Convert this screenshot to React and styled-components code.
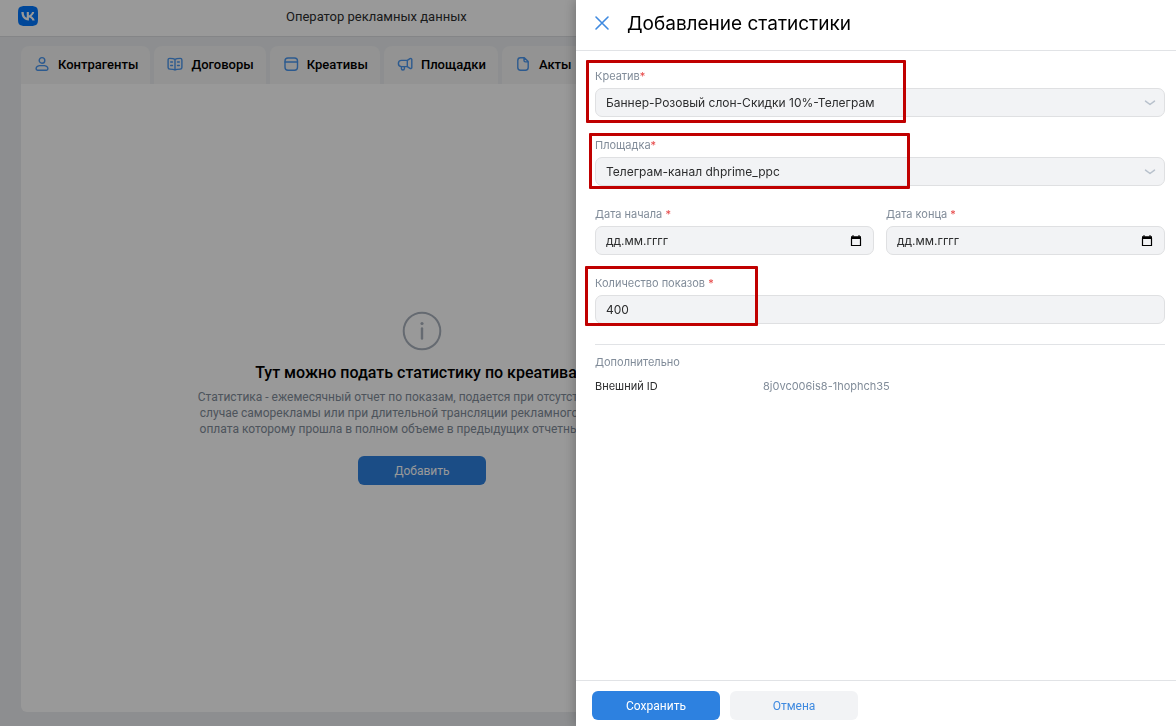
import React, { useState } from "react";
import styled, { createGlobalStyle, css } from "styled-components";
import { SiVk } from "react-icons/si";

const GlobalStyle = createGlobalStyle`
    * {
        box-sizing: border-box;
    }

    body {
        margin: 0;
        background: #ebedf0;
        color: #000;
        font-family: Inter, "Noto Sans", sans-serif;
        font-size: 11px;
        overflow: hidden;
    }

    button, input, select {
        font-family: inherit;
    }
`

const Page = styled.div`
    display: flex;
    flex-direction: column;
    font-family: Roboto, "Noto Sans", sans-serif;
    min-height: 100vh;
`

const TopBar = styled.header`
    align-items: center;
    background: #fff;
    border-bottom: 1px solid #dcdee1;
    display: flex;
    height: 37px;
    padding: 0 18px 4px;
`

const LogoLink = styled.a`
    color: #07f;
    display: flex;
    width: 268px;
`

const LogoMark = styled.span`
    background: #fff;
    border-radius: 6px;
    display: flex;
`

const ServiceName = styled.span`
    color: #2c2d2e;
    font-size: 13px;
`

const Main = styled.main`
    display: flex;
    flex: 1;
    flex-direction: column;
    padding: 9px 353px 14px 21px;
`

const Tabs = styled.nav`
    display: flex;
    gap: 4px;
`

const Tab = styled.a`
    align-items: center;
    background: #f5f5f5;
    border-radius: 8px 8px 0 0;
    color: #000;
    display: flex;
    flex: none;
    font-size: 13px;
    font-weight: 500;
    gap: 8px;
    height: 38px;
    padding: 0 12px 2px 13px;
    text-decoration: none;

    svg {
        color: #4a96ee;
    }
`

const Card = styled.section`
    align-items: center;
    background: #fff;
    border-radius: 0 0 6px 6px;
    display: flex;
    flex: 1;
    flex-direction: column;
    justify-content: center;
    text-align: center;
    white-space: nowrap;
`

const InfoIcon = styled.svg`
    color: #a9b1bc;
    display: block;
`

const CardTitle = styled.h2`
    font-size: 16px;
    font-weight: 500;
    line-height: 24px;
    margin: 10px 0 4px;
`

const CardText = styled.p`
    color: #818c99;
    font-size: 12px;
    line-height: 16px;
    margin: 0 0 19px;
`

const Button = styled.button`
    background: ${props => props.$secondary ? "#f2f3f5" : "#2d81e0"};
    border: 0;
    border-radius: 6px;
    color: ${props => props.$secondary ? "#3f8ae0" : "#fff"};
    cursor: pointer;
    font-family: Roboto, "Noto Sans", sans-serif;
    font-size: 12px;
    height: 29px;
    width: 128px;
`

const Overlay = styled.div`
    background: rgba(0, 0, 0, 0.4);
    inset: 0;
    position: fixed;
`

const Drawer = styled.aside`
    background: #fff;
    box-shadow: 0 0 12px rgba(0, 0, 0, 0.3);
    display: flex;
    flex-direction: column;
    inset: 0 0 0 auto;
    max-width: 100%;
    position: fixed;
    width: 600px;
`

const DrawerHeader = styled.header`
    align-items: center;
    border-bottom: 1px solid #e1e3e6;
    display: flex;
    gap: 17px;
    height: 51px;
    padding: 0 18px 4px;
`

const CloseButton = styled.button`
    background: none;
    border: 0;
    color: #3f8ae0;
    cursor: pointer;
    display: flex;
    padding: 0;
`

const DrawerTitle = styled.h1`
    font-size: 19px;
    font-weight: 400;
    margin: 0;
`

const Form = styled.form`
    display: flex;
    flex: 1;
    flex-direction: column;
`

const Fields = styled.div`
    display: flex;
    flex: 1;
    flex-direction: column;
    gap: 20px;
    padding: 17px 11px 0 19px;
`

const FieldRow = styled.div`
    display: grid;
    gap: 12px;
    grid-template-columns: 1fr 1fr;
`

const FieldBox = styled.div`
    display: flex;
    flex-direction: column;
    gap: 4px;
    position: relative;
`

const Label = styled.label`
    color: #818c99;
    line-height: 16px;
`

const Required = styled.span`
    color: #e64646;
`

const ControlBox = styled.div`
    align-items: center;
    display: grid;

    > * {
        grid-area: 1 / 1;
    }

    > svg, > button {
        justify-self: end;
        margin-right: 9px;
    }

    > svg {
        color: #b8c1cc;
        pointer-events: none;
    }
`

const control = css`
    appearance: none;
    background: #f2f3f5;
    border: 1px solid #dfe0e2;
    border-radius: 7px;
    color: #2c2d2e;
    font-size: 12px;
    height: 29px;
    padding: 0 10px;
    width: 100%;

    &::placeholder {
        color: #2c2d2e;
        opacity: 1;
    }
`

const Select = styled.select`${control}`

const Input = styled.input`${control}`

const CalendarButton = styled.button`
    background: none;
    border: 0;
    color: #000;
    cursor: pointer;
    display: flex;
    padding: 3px;
`

const Highlight = styled.div`
    border: 3px solid #c00000;
    border-radius: 1px;
    inset: ${props => props.$inset};
    pointer-events: none;
    position: absolute;
    width: ${props => props.$width};
`

const Extra = styled.section`
    border-top: 1px solid #e1e3e6;
    line-height: 16px;
    padding-top: 9px;
`

const ExtraTitle = styled.h3`
    color: #818c99;
    font-size: 11px;
    font-weight: 400;
    margin: 0 0 8px;
`

const ExtraList = styled.dl`
    display: grid;
    grid-template-columns: 168px 1fr;
    margin: 0;

    dt {
        color: #2c2d2e;
    }

    dd {
        color: #818c99;
        margin: 0;
    }
`

const DrawerFooter = styled.footer`
    border-top: 1px solid #e1e3e6;
    display: flex;
    gap: 10px;
    padding: 10px 16px 6px;
`

const Icon = ({ size = 16, children }) => (
    <svg width={size} height={size} viewBox="0 0 16 16" fill="none" stroke="currentColor" strokeWidth="1.4" strokeLinecap="round" strokeLinejoin="round" aria-hidden="true">
        {children}
    </svg>
)

const PersonIcon = () => (
    <Icon>
        <circle cx="8" cy="4.4" r="2.8" />
        <path d="M8 9.4c-3.600 0-5.900 1.400-5.900 3.400 0 .9.5 1.400 1.400 1.400h9c.9 0 1.400-.5 1.400-1.400 0-2-2.300-3.400-5.900-3.400Z" />
    </Icon>
)

const BookIcon = () => (
    <Icon>
        <path d="M8 3.300C6.900 2.600 5.300 2.400 2.800 2.400c-1.100 0-1.700.6-1.700 1.600v7.600c0 1 .6 1.500 1.700 1.500 2.300 0 4.100.1 5.200.9 1.100-.8 2.900-.9 5.200-.9 1.100 0 1.700-.5 1.700-1.500V4c0-1-.6-1.600-1.700-1.600-2.500 0-4.100.2-5.200.9ZM8 3.500V14" />
        <path d="M3.700 6h1.800M3.700 9.500h1.800M10.500 6h1.800M10.500 9.500h1.800" />
    </Icon>
)

const CreativeIcon = () => (
    <Icon>
        <rect x="2" y="2" width="12.500" height="12.300" rx="3" />
        <path d="M2 6h12.500" />
    </Icon>
)

const MegaphoneIcon = () => (
    <Icon>
        <path d="M10.300 4.400 13 2.700c.9-.5 1.800-.1 1.800.9v7.800c0 1-.9 1.400-1.800.9l-2.700-1.700H4.500a3.100 3.100 0 0 1 0-6.200ZM10.300 4.400v6.200M4.400 10.800v1.700c0 1 .6 1.500 1.500 1.500s1.500-.5 1.500-1.500v-1.700" />
    </Icon>
)

const FileIcon = () => (
    <Icon>
        <path d="M9.300 1.700H5.500c-1.800 0-2.700.9-2.700 2.700v7.200c0 1.800.9 2.700 2.700 2.700h5c1.800 0 2.700-.9 2.700-2.700V5.600ZM9 1.900v2.600c0 .9.5 1.400 1.400 1.400H13" />
    </Icon>
)

const ChevronIcon = () => (
    <Icon size={12}>
        <path d="m2 5.500 6 4.500 6-4.500" strokeWidth="2" />
    </Icon>
)

const CalendarIcon = () => (
    <svg width="12" height="12" viewBox="0 0 12 12" aria-hidden="true">
        <path d="M1.500 3v7.500h9V3" fill="none" stroke="currentColor" strokeWidth="1.200" />
        <path d="M1 1.200h1.500V0h1v1.200h5V0h1v1.200H11V4H1Z" fill="currentColor" />
    </svg>
)

const tabs = [
    { title: "Контрагенты", icon: <PersonIcon /> },
    { title: "Договоры", icon: <BookIcon /> },
    { title: "Креативы", icon: <CreativeIcon /> },
    { title: "Площадки", icon: <MegaphoneIcon /> },
    { title: "Акты", icon: <FileIcon /> },
]

const Field = ({ id, label, highlight, children }) => (
    <FieldBox>
        <Label htmlFor={id}>{label}<Required>*</Required></Label>
        <ControlBox>{children}</ControlBox>
        {highlight && <Highlight $inset={highlight.inset} $width={highlight.width} />}
    </FieldBox>
)

const DateField = ({ id, label }) => (
    <Field id={id} label={label}>
        <Input id={id} type="text" placeholder="дд.мм.гггг" />
        <CalendarButton type="button" aria-label="Календарь"><CalendarIcon /></CalendarButton>
    </Field>
)

const App = () => {

    const [views, setViews] = useState("400")

    return (
        <div>
            <GlobalStyle />
            <Page>
                <TopBar>
                    <LogoLink href="#" aria-label="VK">
                        <LogoMark><SiVk size={20} /></LogoMark>
                    </LogoLink>
                    <ServiceName>Оператор рекламных данных</ServiceName>
                </TopBar>
                <Main>
                    <Tabs>
                        {tabs.map(tab => (
                            <Tab href="#" key={tab.title}>{tab.icon}{tab.title}</Tab>
                        ))}
                    </Tabs>
                    <Card>
                        <InfoIcon width="40" height="40" viewBox="0 0 40 40" fill="none" stroke="currentColor" aria-hidden="true">
                            <circle cx="20" cy="20" r="18.300" strokeWidth="2" />
                            <path d="M20 17.500v10" strokeWidth="2.400" strokeLinecap="round" />
                            <circle cx="20" cy="12.500" r="1.600" fill="currentColor" stroke="none" />
                        </InfoIcon>
                        <CardTitle>Тут можно подать статистику по креативам</CardTitle>
                        <CardText>
                            Статистика - ежемесячный отчет по показам, подается при отсутствии актов, в<br />
                            случае саморекламы или при длительной трансляции рекламного материала,<br />
                            оплата которому прошла в полном объеме в предыдущих отчетных периодах.
                        </CardText>
                        <Button type="button">Добавить</Button>
                    </Card>
                </Main>
            </Page>
            <Overlay />
            <Drawer>
                <DrawerHeader>
                    <CloseButton type="button" aria-label="Закрыть">
                        <Icon><path d="m2 2 12 12M14 2 2 14" strokeWidth="1.600" /></Icon>
                    </CloseButton>
                    <DrawerTitle>Добавление статистики</DrawerTitle>
                </DrawerHeader>
                <Form>
                    <Fields>
                        <Field id="creative" label="Креатив" highlight={{ inset: "-8px auto -6px -9px", width: "320px" }}>
                            <Select id="creative">
                                <option>Баннер-Розовый слон-Скидки 10%-Телеграм</option>
                            </Select>
                            <ChevronIcon />
                        </Field>
                        <Field id="platform" label="Площадка" highlight={{ inset: "-4px auto -3px -6px", width: "321px" }}>
                            <Select id="platform">
                                <option>Телеграм-канал dhprime_ppc</option>
                            </Select>
                            <ChevronIcon />
                        </Field>
                        <FieldRow>
                            <DateField id="start" label="Дата начала " />
                            <DateField id="end" label="Дата конца " />
                        </FieldRow>
                        <Field id="views" label="Количество показов " highlight={{ inset: "-9px auto -2px -10px", width: "173px" }}>
                            <Input id="views" type="text" value={views} onChange={e => setViews(e.target.value)} />
                        </Field>
                        <Extra>
                            <ExtraTitle>Дополнительно</ExtraTitle>
                            <ExtraList>
                                <dt>Внешний ID</dt>
                                <dd>8j0vc006is8-1hophch35</dd>
                            </ExtraList>
                        </Extra>
                    </Fields>
                    <DrawerFooter>
                        <Button type="submit">Сохранить</Button>
                        <Button type="button" $secondary>Отмена</Button>
                    </DrawerFooter>
                </Form>
            </Drawer>
        </div>
    );
}

export default App;
